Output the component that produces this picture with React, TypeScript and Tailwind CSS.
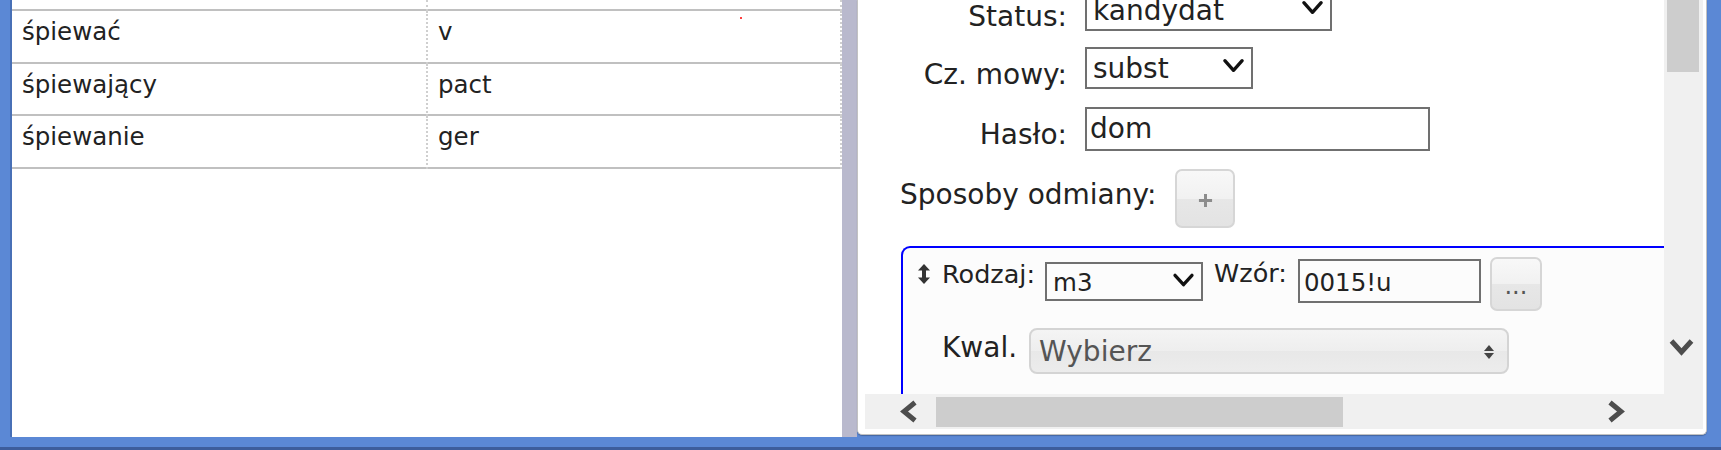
import React from 'react';

const rows: [string, string][] = [
  ['śpiewać', 'v'],
  ['śpiewający', 'pact'],
  ['śpiewanie', 'ger'],
];

function Chevron({ className = '' }: { className?: string }) {
  return (
    <svg viewBox="0 0 24 17" className={className} fill="none" stroke="#111" strokeWidth={3.5} strokeLinecap="round" strokeLinejoin="round">
      <path d="M3 3.5 L12 13.5 L21 3.5" />
    </svg>
  );
}

function DragIcon() {
  return (
    <svg viewBox="0 0 14 20" className="mt-[7px] h-[20px] w-[14px] shrink-0" fill="#333">
      <polygon points="7,0 13,6.5 1,6.5" />
      <rect x="5" y="6" width="4" height="8" />
      <polygon points="1,13.5 13,13.5 7,20" />
    </svg>
  );
}

function UpDown() {
  return (
    <svg viewBox="0 0 10 14" className="mt-[15px] h-[14px] w-[10px]" fill="#444">
      <polygon points="5,0 10,6 0,6" />
      <polygon points="0,8 10,8 5,14" />
    </svg>
  );
}

export default function App() {
  return (
    <div className="flex h-[450px] w-[1721px] items-start overflow-hidden border-b-[3px] border-[#3d5d9c] bg-[#5b88d5] pl-[10px] font-['DejaVu_Sans',sans-serif] text-[#222]">
      {/* left: forms table */}
      <div className="relative h-[437px] w-[832px] shrink-0 overflow-hidden border-l-2 border-[#4870b6] bg-white text-[24.5px] leading-[28.5px]">
        <div className="grid grid-cols-[414px_2px_412px_2px]">
          <div className="h-[11px] border-b-2 border-[#c0c0c0]" />
          <div className="border-l-2 border-dotted border-[#cfcfcf]" />
          <div className="h-[11px] border-b-2 border-[#c0c0c0]" />
          <div className="border-l-2 border-dotted border-[#cfcfcf]" />
          {rows.map(([a, b]) => (
            <React.Fragment key={a}>
              <div className="h-[52.7px] border-b-2 border-[#c0c0c0] pl-[10px] pt-[7px]">{a}</div>
              <div className="border-l-2 border-dotted border-[#cfcfcf]" />
              <div className="h-[52.7px] border-b-2 border-[#c0c0c0] pl-[10px] pt-[7px]">{b}</div>
              <div className="border-l-2 border-dotted border-[#cfcfcf]" />
            </React.Fragment>
          ))}
        </div>
        <div className="absolute left-[728px] top-[17px] h-[2px] w-[2px] rounded-full bg-[#ff0000]" />
      </div>

      {/* splitter */}
      <div className="h-[437px] w-[15px] shrink-0 bg-[#b9b9cd]" />

      {/* right: entry editor */}
      <div className="flex h-[435px] w-[850px] shrink-0 flex-col rounded-b-[5px] border border-t-0 border-[#c2c2c2] bg-white pb-[5px] pl-[7px] pr-[3px] shadow-[0_1px_1px_rgba(0,0,0,0.25)]">
        <div className="flex h-[394px]">
          <div className="h-[394px] w-[799px] overflow-hidden">
            <div className="mt-[-11px] pl-[35px] text-[28px] leading-[33px]">
              <div className="flex h-[42px] items-start">
                <div className="w-[167px] pt-[11px] text-right">Status:</div>
                <div className="ml-[18px] flex h-[42px] w-[247px] items-start justify-between border-2 border-[#707070] pl-[6px] pr-[6px]">
                  <span className="pt-[3px]">kandydat</span>
                  <Chevron className="mt-[8px] h-[17px] w-[23px]" />
                </div>
              </div>

              <div className="mt-[16px] flex h-[42px] items-start">
                <div className="w-[167px] pt-[11px] text-right">Cz. mowy:</div>
                <div className="ml-[18px] flex h-[42px] w-[168px] items-start justify-between border-2 border-[#707070] pl-[6px] pr-[6px]">
                  <span className="pt-[3px]">subst</span>
                  <Chevron className="mt-[8px] h-[17px] w-[23px]" />
                </div>
              </div>

              <div className="mt-[18px] flex h-[44px] items-start">
                <div className="w-[167px] pt-[11px] text-right">Hasło:</div>
                <div className="ml-[18px] h-[44px] w-[345px] border-2 border-[#707070] pl-[3px] pt-[3px]">dom</div>
              </div>

              <div className="mt-[18px] flex h-[59px] items-start">
                <div className="pt-[9px]">Sposoby odmiany:</div>
                <div className="ml-[19px] flex h-[59px] w-[60px] items-center justify-center rounded-[7px] border-2 border-[#d6d6d6] bg-[linear-gradient(#f8f8f8,#f1f1f1_50%,#e7e7e7_50%,#e3e3e3)]">
                  <svg viewBox="0 0 16 16" className="mt-[4px] h-[15px] w-[15px]" stroke="#8c8c8c" strokeWidth={3.2}>
                    <path d="M8 1 V15 M1 8 H15" />
                  </svg>
                </div>
              </div>

              {/* inflection block */}
              <div className="ml-[1px] mt-[18px] h-[200px] w-[900px] rounded-tl-[9px] border-l-2 border-t-2 border-[#0000ff] bg-[#fcfcfc] pl-[14px] pt-[9px]">
                <div className="flex h-[54px] items-start">
                  <DragIcon />
                  <span className="ml-[11px] mt-[2px] text-[25.5px] leading-[30px]">Rodzaj:</span>
                  <div className="ml-[10px] mt-[5px] flex h-[39px] w-[158px] items-start justify-between border-2 border-[#707070] pl-[6px] pr-[5px] text-[24.5px] leading-[28.5px]">
                    <span className="pt-[5px]">m3</span>
                    <Chevron className="mt-[8px] h-[16px] w-[25px]" />
                  </div>
                  <span className="ml-[11px] mt-[1px] text-[25.5px] leading-[30px]">Wzór:</span>
                  <div className="ml-[11px] mt-[2px] h-[44px] w-[183px] border-2 border-[#707070] pl-[4px] pt-[8px] text-[24.5px] leading-[28.5px]">0015!u</div>
                  <div className="ml-[9px] h-[54px] w-[52px] rounded-[7px] border-2 border-[#d6d6d6] bg-[linear-gradient(#f8f8f8,#f1f1f1_50%,#e7e7e7_50%,#e3e3e3)] pt-[13px] text-center text-[24px] leading-[28px] text-[#555]">...</div>
                </div>

                <div className="ml-[25px] mt-[17px] flex items-start">
                  <span className="mt-[3px]">Kwal.</span>
                  <div className="ml-[12px] flex h-[46px] w-[480px] items-start justify-between rounded-[8px] border-2 border-[#d4d4d4] bg-[linear-gradient(#f4f4f4,#eeeeee_50%,#e8e8e8_50%,#ececec)] pl-[8px] pr-[13px] text-[#555]">
                    <span className="pt-[5px]">Wybierz</span>
                    <UpDown />
                  </div>
                </div>
              </div>
            </div>
          </div>

          {/* vertical scrollbar */}
          <div className="flex h-[394px] w-[39px] flex-col bg-[#f0f0f0]">
            <div className="ml-[3px] h-[72px] w-[32px] bg-[#cdcdcd]" />
            <svg viewBox="0 0 25 19" className="ml-[5px] mt-[266px] h-[19px] w-[25px]" fill="none" stroke="#4d4d4d" strokeWidth={5}>
              <path d="M2.5 3 L12.5 14 L22.5 3" />
            </svg>
          </div>
        </div>

        {/* horizontal scrollbar */}
        <div className="flex h-[35px] items-center bg-[#f0f0f0]">
          <svg viewBox="0 0 19 23" className="ml-[34px] h-[23px] w-[19px]" fill="none" stroke="#4d4d4d" strokeWidth={5}>
            <path d="M16 2.5 L5 11.5 L16 20.5" />
          </svg>
          <div className="ml-[18px] h-[30px] w-[407px] bg-[#cdcdcd]" />
          <svg viewBox="0 0 19 23" className="ml-[264px] h-[23px] w-[19px]" fill="none" stroke="#4d4d4d" strokeWidth={5}>
            <path d="M3 2.5 L14 11.5 L3 20.5" />
          </svg>
        </div>
      </div>
    </div>
  );
}
